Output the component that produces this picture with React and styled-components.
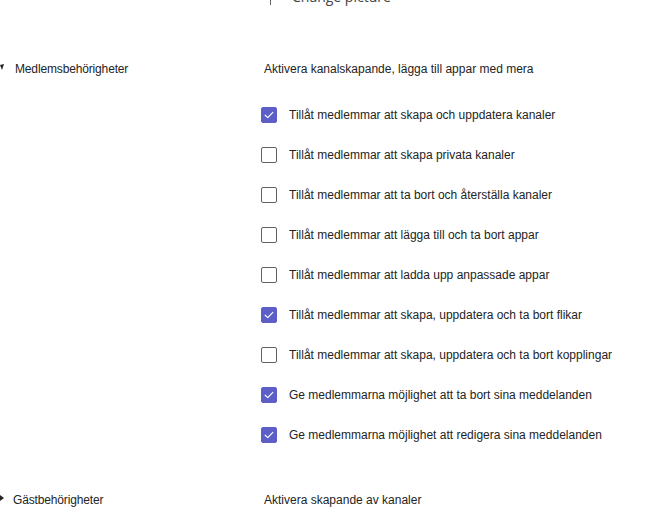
import React from "react";
import styled, { createGlobalStyle } from "styled-components";

const Global = createGlobalStyle`
  html, body { margin: 0; padding: 0; background: #ffffff; overflow: hidden; }
  body { font-family: "Liberation Sans", Arial, sans-serif; color: #242424; }
`;

const Page = styled.div`
  width: 671px;
  height: 521px;
  overflow: hidden;
  position: relative;
`;

const PictureRow = styled.div`
  display: flex;
  align-items: center;
  gap: 21px;
  margin-top: -12px;
  padding-left: 270px;
  height: 17px;
`;

const Divider = styled.div`
  width: 1px;
  height: 17px;
  background: #616161;
`;

const PictureLink = styled.span`
  font-family: "Open Sans", "Liberation Sans", sans-serif;
  font-size: 14px;
  color: #424242;
`;

const Section = styled.section`
  display: grid;
  grid-template-columns: 264px 1fr;
  margin-top: ${(p) => p.$top}px;
`;

const SectionHead = styled.div`
  display: flex;
  align-items: center;
  gap: ${(p) => p.$gap}px;
  height: 16px;
  font-size: 12px;
  letter-spacing: -0.15px;
  color: #242424;
`;

const Caret = styled.svg`
  width: 4px;
  height: 6px;
  flex: none;
  margin-top: -4px;
`;

const Body = styled.div`
  display: flex;
  flex-direction: column;
`;

const Description = styled.div`
  height: 16px;
  display: flex;
  align-items: center;
  font-size: 12px;
  color: #242424;
`;

const List = styled.ul`
  list-style: none;
  margin: 30px 0 0 -3px;
  padding: 0;
  display: flex;
  flex-direction: column;
  gap: 24px;
`;

const Item = styled.li`
  display: flex;
  align-items: center;
  gap: 12px;
  height: 16px;
`;

const Box = styled.span`
  width: 16px;
  height: 16px;
  box-sizing: border-box;
  border-radius: 2px;
  flex: none;
  display: flex;
  align-items: center;
  justify-content: center;
  background: ${(p) => (p.$on ? "#5b5fc7" : "#ffffff")};
  border: 1px solid ${(p) => (p.$on ? "#5b5fc7" : "#616161")};
`;

const ItemText = styled.span`
  font-size: 12px;
  color: #242424;
`;

const Check = () => (
  <svg width="10" height="8" viewBox="0 0 10 8">
    <path d="M1.2 4.2 L3.8 6.6 L8.8 1.4" fill="none" stroke="#ffffff" strokeWidth="1.2" strokeLinecap="round" strokeLinejoin="round" />
  </svg>
);

const memberItems = [
  ["Tillåt medlemmar att skapa och uppdatera kanaler", true],
  ["Tillåt medlemmar att skapa privata kanaler", false],
  ["Tillåt medlemmar att ta bort och återställa kanaler", false],
  ["Tillåt medlemmar att lägga till och ta bort appar", false],
  ["Tillåt medlemmar att ladda upp anpassade appar", false],
  ["Tillåt medlemmar att skapa, uppdatera och ta bort flikar", true],
  ["Tillåt medlemmar att skapa, uppdatera och ta bort kopplingar", false],
  ["Ge medlemmarna möjlighet att ta bort sina meddelanden", true],
  ["Ge medlemmarna möjlighet att redigera sina meddelanden", true],
];

export default function App() {
  return (
    <Page>
      <Global />
      <PictureRow>
        <Divider />
        <PictureLink>Change picture</PictureLink>
      </PictureRow>

      <Section $top={56}>
        <SectionHead $gap={11}>
          <Caret viewBox="0 0 4 6">
            <path d="M0 1 L4 0 L2 6 Z" fill="#242424" />
          </Caret>
          Medlemsbehörigheter
        </SectionHead>
        <Body>
          <Description>Aktivera kanalskapande, lägga till appar med mera</Description>
          <List>
            {memberItems.map(([label, on]) => (
              <Item key={label}>
                <Box $on={on}>{on && <Check />}</Box>
                <ItemText>{label}</ItemText>
              </Item>
            ))}
          </List>
        </Body>
      </Section>

      <Section $top={49}>
        <SectionHead $gap={9}>
          <Caret viewBox="0 0 4 6">
            <path d="M0 0 L4 3 L0 6 Z" fill="#242424" />
          </Caret>
          Gästbehörigheter
        </SectionHead>
        <Body>
          <Description>Aktivera skapande av kanaler</Description>
        </Body>
      </Section>
    </Page>
  );
}
